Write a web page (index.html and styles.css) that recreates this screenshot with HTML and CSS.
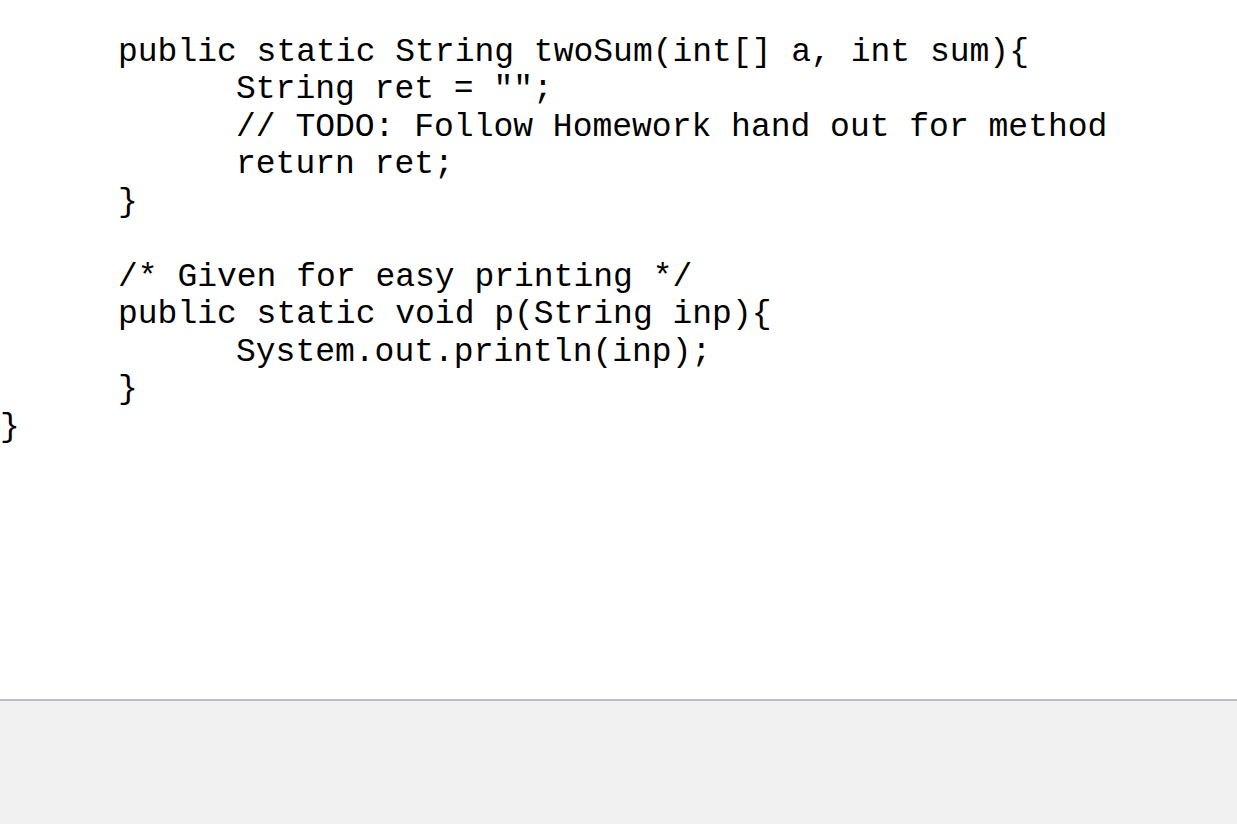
FILE: index.html
```html
<!DOCTYPE html>
<html>
<head>
<meta charset="utf-8">
<link rel="stylesheet" href="styles.css">
</head>
<body>
<div class="page">
<main class="doc">
<pre class="code">	public static String twoSum(int[] a, int sum){
		String ret = "";
		// TODO: Follow Homework hand out for method
		return ret;
	}

	/* Given for easy printing */
	public static void p(String inp){
		System.out.println(inp);
	}
}</pre>
</main>
<footer class="panel"></footer>
</div>
</body>
</html>
```
FILE: styles.css
```css
html, body {
  margin: 0;
  padding: 0;
  background: #ffffff;
}
.page {
  display: flex;
  flex-direction: column;
  height: 100vh;
  overflow: hidden;
}
.doc {
  flex: 1;
  min-height: 0;
  overflow: hidden;
}
.code {
  margin: 0;
  padding: 34px 0 0 0;
  font-family: "Liberation Mono", monospace;
  font-size: 33px;
  line-height: 37.45px;
  color: #000000;
  tab-size: 118px;
  -moz-tab-size: 118px;
}
.panel {
  height: 123px;
  border-top: 2px solid #b9bcc0;
  background: #f1f1f1;
  flex: none;
}
```
